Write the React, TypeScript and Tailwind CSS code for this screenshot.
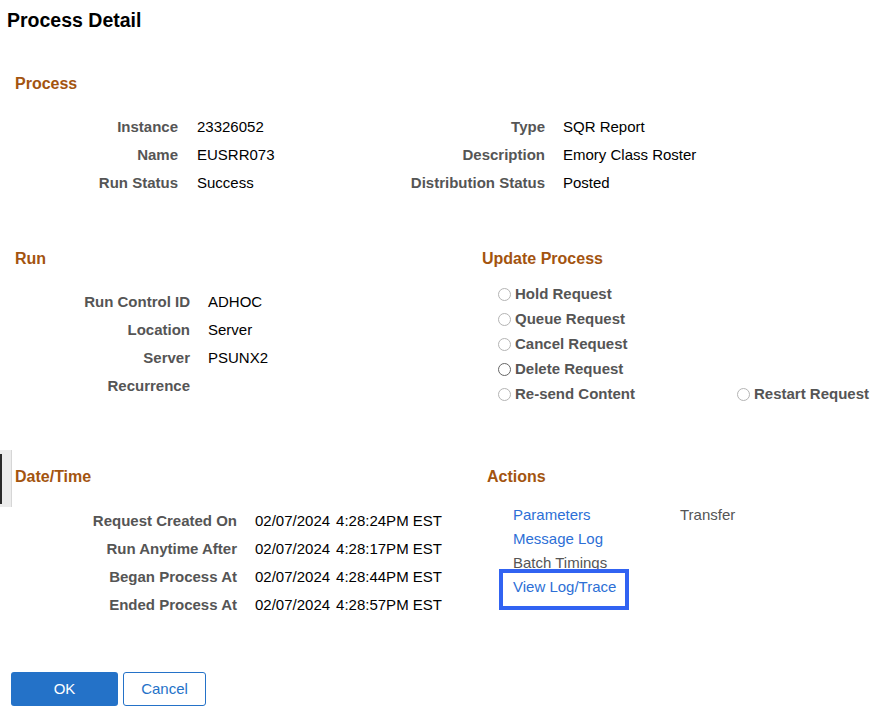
import React from "react";

const label = "font-bold text-[#555555] text-right whitespace-nowrap";
const heading = "text-[16px] leading-[20px] font-bold text-[#a3540f]";

const Radio = ({ text, dark = false }: { text: string; dark?: boolean }) => (
  <div className="flex items-center gap-[4px] h-[25px]">
    <span
      className={
        "inline-block w-[13px] h-[13px] rounded-full bg-white " +
        (dark ? "border-[1.5px] border-[#666666]" : "border border-[#b4b4b4]")
      }
    />
    <span className="font-bold text-[#555555]">{text}</span>
  </div>
);

const App = () => {
  const processRows = [
    ["Instance", "23326052", "Type", "SQR Report"],
    ["Name", "EUSRR073", "Description", "Emory Class Roster"],
    ["Run Status", "Success", "Distribution Status", "Posted"],
  ];
  const runRows = [
    ["Run Control ID", "ADHOC"],
    ["Location", "Server"],
    ["Server", "PSUNX2"],
    ["Recurrence", ""],
  ];
  const dateRows = [
    ["Request Created On", "4:28:24PM EST"],
    ["Run Anytime After", "4:28:17PM EST"],
    ["Began Process At", "4:28:44PM EST"],
    ["Ended Process At", "4:28:57PM EST"],
  ];

  return (
    <div
      className="relative w-[895px] h-[721px] overflow-hidden bg-white text-black text-[15px]"
      style={{ fontFamily: '"Liberation Sans", Arial, sans-serif' }}
    >
      {/* collapsed side tab */}
      <div className="absolute left-0 top-[450px] w-[12px] h-[57px] bg-[#ececec] border-r border-[#d6d6d6]">
        <div className="w-[2px] h-[50px] mt-[4px] bg-[#2a2a2a]" />
      </div>

      <h1 className="pt-[8px] pl-[7px] text-[19.5px] leading-[24px] font-bold">Process Detail</h1>

      {/* Process */}
      <div className={heading + " mt-[42px] pl-[15px]"}>Process</div>
      <div className="mt-[19px] grid grid-cols-[178px_225px_142px_1fr] leading-[28px]">
        {processRows.map((r) => (
          <React.Fragment key={r[0]}>
            <div className={label}>{r[0]}</div>
            <div className="pl-[19px]">{r[1]}</div>
            <div className={label}>{r[2]}</div>
            <div className="pl-[18px]">{r[3]}</div>
          </React.Fragment>
        ))}
      </div>

      {/* Run / Update Process */}
      <div className="mt-[52px] flex">
        <div className="w-[482px]">
          <div className={heading + " pl-[15px]"}>Run</div>
          <div className="mt-[19px] grid grid-cols-[190px_1fr] leading-[28px]">
            {runRows.map((r) => (
              <React.Fragment key={r[0]}>
                <div className={label}>{r[0]}</div>
                <div className="pl-[18px]">{r[1]}</div>
              </React.Fragment>
            ))}
          </div>
        </div>
        <div className="flex-1">
          <div className={heading}>Update Process</div>
          <div className="mt-[13px] pl-[16px]">
            <Radio text="Hold Request" />
            <Radio text="Queue Request" />
            <Radio text="Cancel Request" />
            <Radio text="Delete Request" dark />
            <div className="flex">
              <div className="w-[239px]">
                <Radio text="Re-send Content" />
              </div>
              <Radio text="Restart Request" />
            </div>
          </div>
        </div>
      </div>

      {/* Date/Time / Actions */}
      <div className="mt-[60px] flex">
        <div className="w-[487px]">
          <div className={heading + " pl-[15px]"}>Date/Time</div>
          <div className="mt-[20px] grid grid-cols-[237px_1fr] leading-[28px]">
            {dateRows.map((r) => (
              <React.Fragment key={r[0]}>
                <div className={label}>{r[0]}</div>
                <div className="pl-[18px] whitespace-nowrap">
                  <span>02/07/2024</span>
                  <span className="ml-[6px]">{r[1]}</span>
                </div>
              </React.Fragment>
            ))}
          </div>
        </div>
        <div className="flex-1">
          <div className={heading}>Actions</div>
          <div className="mt-[16px] pl-[26px] grid grid-cols-[167px_1fr] leading-[24px]">
            <a className="text-[#2d6fd6]">Parameters</a>
            <span className="text-[#555555]">Transfer</span>
            <a className="text-[#2d6fd6]">Message Log</a>
            <span />
            <span className="text-[#555555]">Batch Timings</span>
            <span />
            <div className="relative">
              <a className="text-[#2d6fd6]">View Log/Trace</a>
              <div className="absolute left-[-14px] top-[-6px] w-[130px] h-[41px] border-[4px] border-[#3163f2]" />
            </div>
            <span />
          </div>
        </div>
      </div>

      {/* Buttons */}
      <div className="mt-[53px] pl-[11px] flex gap-[5px]">
        <button className="w-[107px] h-[34px] rounded-[3px] bg-[#2472c8] text-white text-[15px]">OK</button>
        <button className="w-[83px] h-[34px] rounded-[3px] bg-white border border-[#2472c8] text-[#2472c8] text-[15px]">
          Cancel
        </button>
      </div>
    </div>
  );
};

export default App;
